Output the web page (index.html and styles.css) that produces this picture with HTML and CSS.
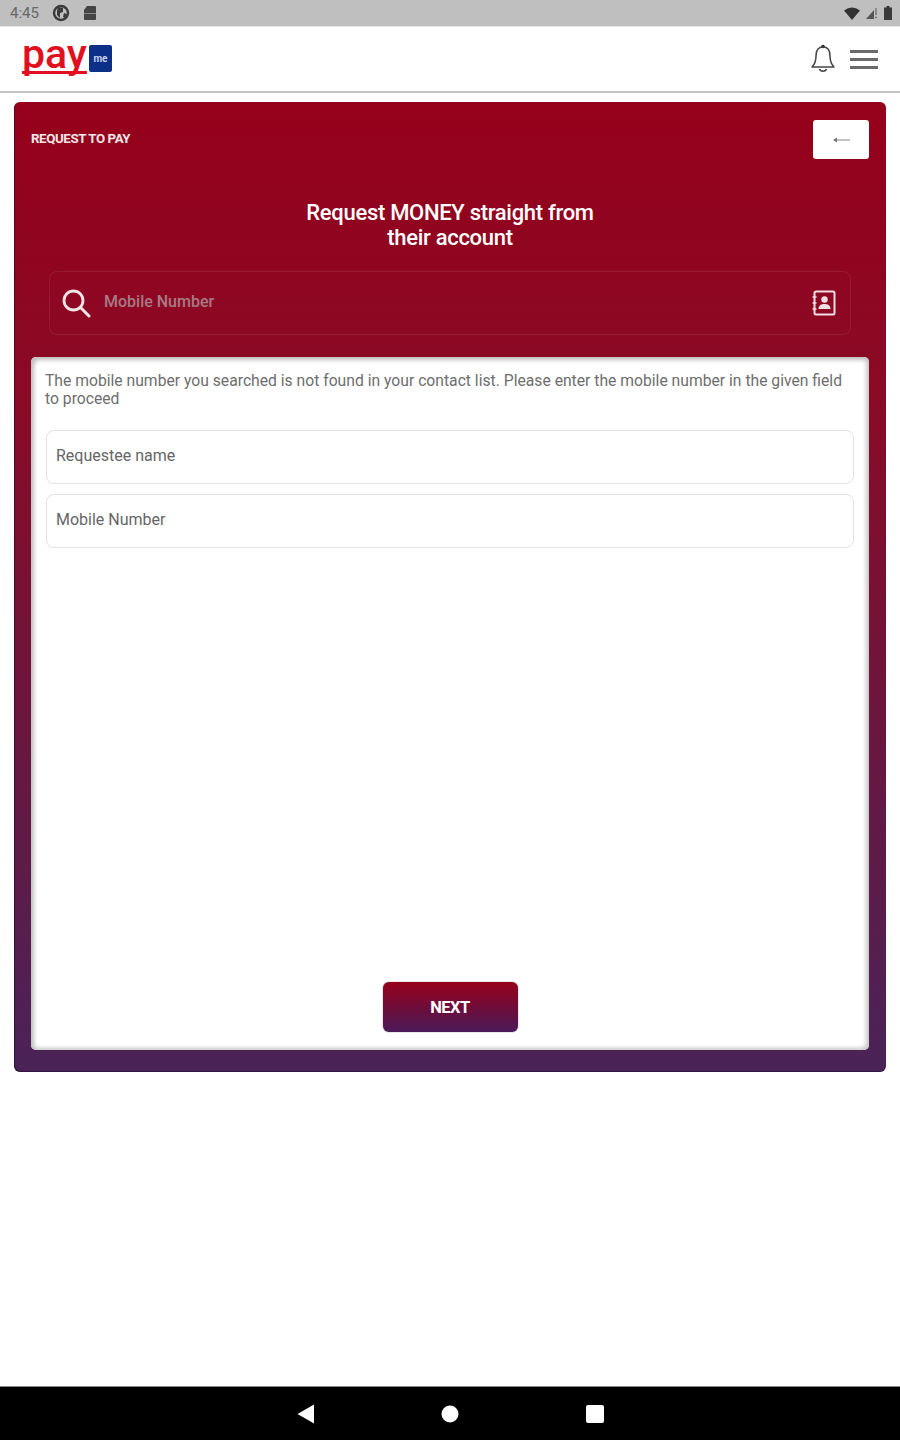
FILE: index.html
```html
<!DOCTYPE html>
<html lang="en">
<head>
    <meta charset="UTF-8">
    <meta name="viewport" content="width=device-width, initial-scale=1.0">
    <title>PayMe - Request to Pay</title>
    <link rel="stylesheet" href="styles.css">
</head>
<body>

    <div class="status-bar">
        <div class="status-left">
            <span class="status-time">4:45</span>
            <svg width="18" height="18" viewBox="0 0 18 18">
                <circle cx="9" cy="9" r="7" fill="none" stroke="#3a3a3a" stroke-width="2.400"/>
                <path d="M6 3l5 1v4l-3 1v5l-3-3V7z M12 9l3 1-2 4-2-1z" fill="#3a3a3a"/>
            </svg>
            <svg width="14" height="16" viewBox="0 0 14 16">
                <path d="M4 1h8a1 1 0 0 1 1 1v12a1 1 0 0 1-1 1H2a1 1 0 0 1-1-1V5z" fill="#444"/>
                <path d="M1 8.500h12" stroke="#8a8a8a" stroke-width="1"/>
            </svg>
        </div>
        <div class="status-right">
            <svg width="16" height="13" viewBox="0 0 16 13"><path d="M0 3.500Q8-2.500 16 3.500L8 13z" fill="#333"/></svg>
            <svg width="12" height="12" viewBox="0 0 12 12"><path d="M8 3v9H0z" fill="#555"/><path d="M10 1v7" stroke="#777" stroke-width="1.500"/><circle cx="10" cy="10.500" r="1" fill="#777"/></svg>
            <svg width="8" height="14" viewBox="0 0 8 14"><path d="M2.500 0h3v1.500H8V14H0V1.500h2.500z" fill="#3a3a3a"/></svg>
        </div>
    </div>

    <header class="app-header">
        <div class="logo">
            <span class="logo-pay">pay</span>
            <span class="logo-me">me</span>
        </div>
        <div class="header-actions">
            <svg width="28" height="32" viewBox="0 0 28 32">
                <circle cx="14" cy="3.500" r="1.800" fill="#222"/>
                <path d="M14 4c-5 0-7 4-7 9 0 5-1 8-4 11h22c-3-3-4-6-4-11 0-5-2-9-7-9z" fill="none" stroke="#444" stroke-width="1.500" stroke-linejoin="round"/>
                <path d="M10.500 26c1 3 6 3 7 0" fill="none" stroke="#444" stroke-width="1.500"/>
            </svg>
            <div class="hamburger"><i></i><i></i><i></i></div>
        </div>
    </header>

    <main class="panel">
        <div class="panel-top">
            <span class="panel-label">REQUEST TO PAY</span>
            <button class="back-btn">
                <svg width="20" height="10" viewBox="0 0 20 10">
                    <path d="M19 5H3" stroke="#999" stroke-width="1.200"/>
                    <path d="M2 5l4-2.500v5z" fill="#777"/>
                </svg>
            </button>
        </div>

        <h1 class="panel-title">Request MONEY straight from<br>their account</h1>

        <div class="search-box">
            <svg width="30" height="30" viewBox="0 0 30 30">
                <circle cx="12.500" cy="12.500" r="9.500" fill="none" stroke="#f3e4e6" stroke-width="2.800"/>
                <path d="M19.500 19.500L28 28" stroke="#f3e4e6" stroke-width="3" stroke-linecap="round"/>
            </svg>
            <span class="search-placeholder">Mobile Number</span>
            <svg width="24" height="26" viewBox="0 0 24 26">
                <rect x="2.500" y="1.500" width="20" height="23" rx="1.500" fill="none" stroke="#f0dfe2" stroke-width="2"/>
                <circle cx="12.500" cy="9.500" r="3.200" fill="#f0dfe2"/>
                <path d="M6.500 19c0-4 3-5 6-5s6 1 6 5z" fill="#f0dfe2"/>
                <path d="M0.500 7h4M0.500 13h4M0.500 19h4" stroke="#f0dfe2" stroke-width="1.500"/>
            </svg>
        </div>

        <section class="card">
            <p class="card-note">The mobile number you searched is not found in your contact list. Please enter the mobile number in the given field to proceed</p>
            <div class="field">Requestee name</div>
            <div class="field">Mobile Number</div>
            <button class="next-btn">NEXT</button>
        </section>
    </main>

    <footer class="nav-bar">
        <svg width="18" height="20" viewBox="0 0 18 20"><path d="M0.500 10L17 0.500v19z" fill="#fff"/></svg>
        <svg width="18" height="18" viewBox="0 0 18 18"><circle cx="9" cy="9" r="8.500" fill="#fff"/></svg>
        <svg width="20" height="20" viewBox="0 0 20 20"><rect x="1" y="1" width="18" height="18" rx="2" fill="#fff"/></svg>
    </footer>

</body>
</html>
```

FILE: styles.css
```css
body {
    margin: 0;
    height: 1440px;
    display: flex;
    flex-direction: column;
    background-color: #fff;
    font-family: Roboto, "Liberation Sans", sans-serif;
    overflow: hidden;
}
.status-bar {
    height: 26px;
    flex-shrink: 0;
    display: flex;
    justify-content: space-between;
    align-items: center;
    padding: 0 8px 0 10px;
    background-color: #bfbfbf;
}
.status-left, .status-right {
    display: flex;
    align-items: center;
}
.status-left {
    gap: 13px;
}
.status-right {
    gap: 6px;
}
.status-time {
    font-size: 15px;
    color: #666;
}
.app-header {
    height: 64px;
    flex-shrink: 0;
    display: flex;
    justify-content: space-between;
    align-items: center;
    padding: 0 22px;
    background-color: #fff;
    border-top: 1px solid #e4e4e4;
    border-bottom: 2px solid #c4c4c4;
}
.logo {
    display: flex;
    align-items: center;
    gap: 2px;
}
.logo-pay {
    font-size: 41px;
    line-height: 40px;
    font-weight: 500;
    color: #e01020;
    margin-top: -10px;
    text-decoration: underline 3px;
    text-decoration-skip-ink: none;
    text-underline-offset: 3px;
}
.logo-me {
    width: 23px;
    height: 27px;
    display: flex;
    justify-content: center;
    align-items: center;
    margin-top: -2px;
    border-radius: 2px;
    background-color: #0c3088;
    color: #c8d2ea;
    font-size: 10px;
    font-weight: 700;
}
.header-actions {
    display: flex;
    align-items: center;
    gap: 13px;
}
.hamburger {
    width: 28px;
    display: flex;
    flex-direction: column;
    gap: 5px;
}
.hamburger i {
    height: 3px;
    background-color: #6a6a6a;
}
.panel {
    height: 970px;
    box-sizing: border-box;
    margin: 9px 14px 0;
    padding: 18px 17px 22px;
    display: flex;
    flex-direction: column;
    border-radius: 6px;
    background: linear-gradient(to bottom, #96001a 0%, #8a0a26 30%, #4a2358 100%);
    box-shadow: inset 1px -1px 1px rgba(20, 5, 40, 0.5);
}
.panel-top {
    display: flex;
    justify-content: space-between;
    align-items: center;
}
.panel-label {
    margin-bottom: 2px;
    font-size: 13.300px;
    font-weight: 700;
    letter-spacing: -0.4px;
    color: #f6e6e8;
}
.back-btn {
    width: 56px;
    height: 39px;
    display: flex;
    justify-content: center;
    align-items: center;
    padding: 0;
    border: none;
    border-radius: 3px;
    background-color: #fff;
}
.panel-title {
    margin: 41px 0 21px;
    font-size: 22px;
    line-height: 25px;
    font-weight: 500;
    letter-spacing: -0.3px;
    text-align: center;
    color: #fff;
}
.search-box {
    height: 64px;
    box-sizing: border-box;
    margin: 0 18px 22px;
    padding: 0 14px 0 11px;
    display: flex;
    align-items: center;
    border: 1px solid rgba(255, 255, 255, 0.08);
    border-radius: 8px;
}
.search-placeholder {
    flex: 1;
    margin-left: 13px;
    padding-bottom: 3px;
    font-size: 16px;
    font-weight: 500;
    color: #a87a85;
}
.card {
    flex: 1;
    box-sizing: border-box;
    padding: 15px 14px 18px;
    display: flex;
    flex-direction: column;
    gap: 10px;
    border-radius: 5px;
    background-color: #fff;
    box-shadow: inset 3px 3px 4px #bdbdbd, inset -3px -2px 4px #c8c8c8;
}
.card-note {
    margin: 0 0 12px;
    font-size: 15.700px;
    line-height: 18px;
    color: #6e6e6e;
}
.field {
    height: 54px;
    box-sizing: border-box;
    margin: 0 1px;
    padding: 0 0 3px 9px;
    display: flex;
    align-items: center;
    border: 1px solid #e2e2e2;
    border-radius: 8px;
    font-size: 16px;
    color: #666;
}
.next-btn {
    width: 135px;
    height: 50px;
    margin: auto auto 0;
    border: none;
    border-radius: 6px;
    background: linear-gradient(to bottom, #96001a, #4a1a58);
    box-shadow: 0 0 1px #2a0a3a;
    color: #fff;
    font-family: inherit;
    font-size: 16.500px;
    font-weight: 700;
    letter-spacing: -0.5px;
}
.nav-bar {
    height: 53px;
    flex-shrink: 0;
    margin-top: auto;
    padding-left: 1px;
    display: flex;
    justify-content: center;
    align-items: center;
    gap: 126px;
    border-top: 1px solid #888;
    background-color: #000;
}
```
